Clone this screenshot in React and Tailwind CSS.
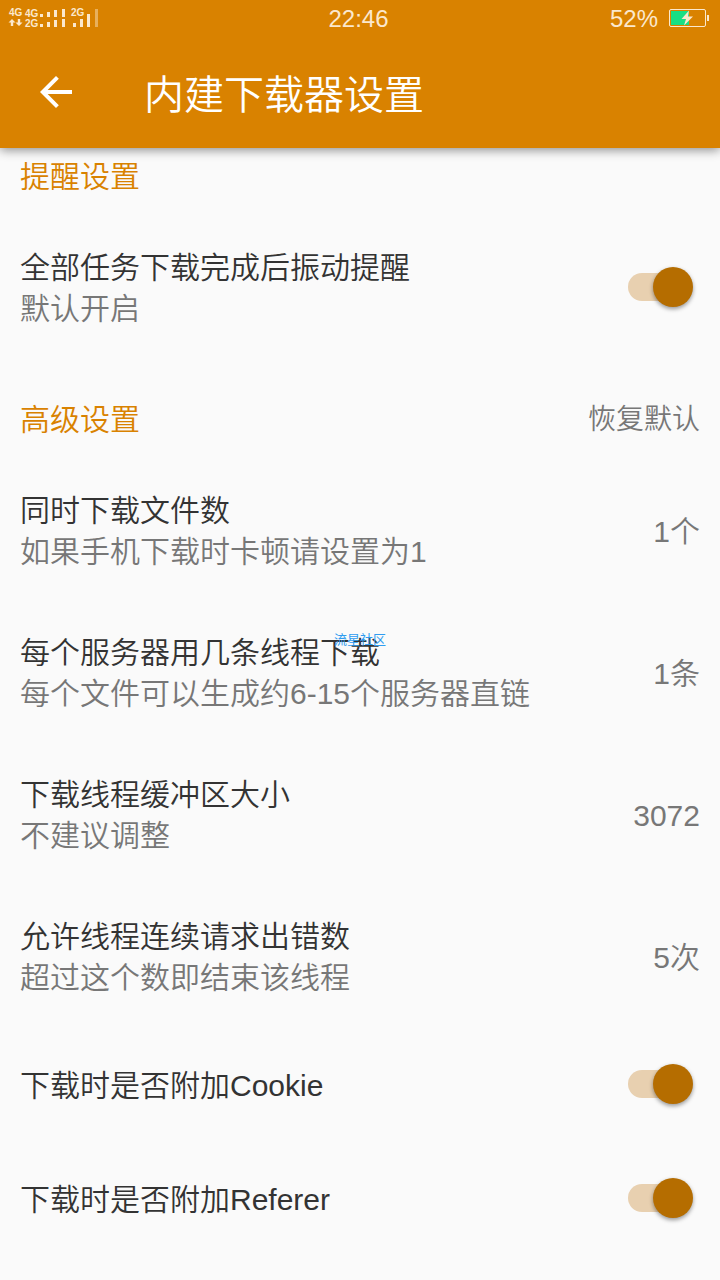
import React, { useState } from 'react';
import { MdArrowBack } from 'react-icons/md';

// Signal strength of both SIM cards
function SignalIcon() {
  return (
    <svg width="92" height="22" viewBox="0 0 92 22" fill="currentColor" aria-hidden="true">
      <g fontFamily="Liberation Sans, Arial, sans-serif" fontSize="10" fontWeight="700">
        <text x="1" y="9">4G</text>
        <text x="17" y="10">4G</text>
        <text x="17" y="20">2G</text>
        <text x="63" y="9">2G</text>
      </g>

      {/* data up / down arrows */}
      <path d="M4 12l3.500 3.500H5.200V19H2.800v-3.500H0.500z" />
      <path d="M11 19l3.500-3.500h-2.300V12H9.800v3.500H7.500z" />

      {/* first SIM, two networks */}
      <path d="M32 7h3v3h-3zM39 5h3v5h-3zM46 3h3v7h-3zM54 2h3v8h-3z" />
      <path d="M32 17h3v3h-3zM39 15h3v5h-3zM46 13h3v7h-3zM54 12h3v8h-3z" />

      {/* second SIM */}
      <path d="M65 16h3v4h-3zM72 12h3v8h-3zM79 7h3v13h-3z" />
      <path d="M87 2h3v18h-3z" opacity="0.45" />
    </svg>
  );
}

function BatteryIcon() {
  return (
    <svg width="41" height="20" viewBox="0 0 41 20" fill="none" aria-hidden="true">
      <rect x="1.500" y="1.500" width="36" height="17" rx="1.500" stroke="#fbe8cd" />
      <rect x="3" y="3" width="18" height="14" fill="#18df84" />
      <path d="M39 7h2v6h-2z" fill="#fbe8cd" />
      <path d="M21 2.500L13.500 11H18l-2 6.500L25 8.500h-5z" fill="#fbe8cd" />
    </svg>
  );
}

function StatusBar() {
  return (
    <div className="grid h-9 grid-cols-3 items-center pr-[11px] pl-2 text-[24px] leading-8 text-[#fbe8cd]">
      <SignalIcon />
      <span className="pt-[2px] text-center">22:46</span>
      <div className="flex items-center justify-end gap-[10px]">
        <span className="pt-[2px]">52%</span>
        <BatteryIcon />
      </div>
    </div>
  );
}

function SectionHeader({ title, children }) {
  return (
    <div className="flex items-center justify-between pb-5">
      <h2 className="text-[#d98200]">{title}</h2>
      {children}
    </div>
  );
}

function Switch({ id, defaultChecked }) {
  const [checked, setChecked] = useState(defaultChecked);

  return (
    <input
      id={id}
      type="checkbox"
      role="switch"
      checked={checked}
      onChange={(e) => setChecked(e.target.checked)}
      className="relative mr-3 mb-[2px] h-7 w-15 shrink-0 cursor-pointer appearance-none rounded-full bg-[#cccccc] before:absolute before:-top-[6px] before:-left-[5px] before:size-10 before:rounded-full before:bg-[#f1f1f1] before:shadow-[0_2px_4px_rgba(0,0,0,0.4)] before:transition-transform checked:bg-[#e8d0b0] checked:before:translate-x-[30px] checked:before:bg-[#b56d00]"
    />
  );
}

function SwitchRow({ id, title, summary }) {
  return (
    <div className={`flex items-center justify-between ${summary ? 'py-[30px]' : 'h-[114px]'}`}>
      <label htmlFor={id} className="flex flex-col">
        <span>{title}</span>
        {summary && <span className="text-[#777777]">{summary}</span>}
      </label>
      <Switch id={id} defaultChecked />
    </div>
  );
}

function ValueRow({ title, summary, value }) {
  return (
    <button type="button" className="flex w-full items-center justify-between py-[30px] text-left">
      <span className="flex flex-col">
        <span>{title}</span>
        <span className="text-[#777777]">{summary}</span>
      </span>
      <span className="text-[#777777]">{value}</span>
    </button>
  );
}

const advancedRows = [
  { title: '同时下载文件数', summary: '如果手机下载时卡顿请设置为1', value: '1个' },
  { title: '每个服务器用几条线程下载', summary: '每个文件可以生成约6-15个服务器直链', value: '1条' },
  { title: '下载线程缓冲区大小', summary: '不建议调整', value: '3072' },
  { title: '允许线程连续请求出错数', summary: '超过这个数即结束该线程', value: '5次' },
];

export default function App() {
  return (
    <div className="relative min-h-screen bg-[#fafafa] font-['Liberation_Sans','Noto_Sans_CJK_SC',sans-serif] text-[30px] leading-[41px] font-[350] text-[#333333]">
      <header className="bg-[#d98200] text-white shadow-[0_2px_10px_rgba(0,0,0,0.45)]">
        <StatusBar />
        <div className="flex h-28 items-center gap-16 px-8">
          <button type="button" aria-label="返回">
            <MdArrowBack size={48} />
          </button>
          <h1 className="pt-[6px] text-[40px] leading-[48px]">内建下载器设置</h1>
        </div>
      </header>

      <main className="px-5">
        <section className="pt-2">
          <SectionHeader title="提醒设置" />
          <SwitchRow id="vibrate" title="全部任务下载完成后振动提醒" summary="默认开启" />
        </section>

        <section className="pt-10">
          <SectionHeader title="高级设置">
            <button type="button" className="text-[28px] text-[#777777]">恢复默认</button>
          </SectionHeader>
          {advancedRows.map((row) => (
            <ValueRow key={row.title} {...row} />
          ))}
          <SwitchRow id="cookie" title="下载时是否附加Cookie" />
          <SwitchRow id="referer" title="下载时是否附加Referer" />
        </section>
      </main>

      {/* community watermark */}
      <div className="pointer-events-none absolute inset-0 flex items-center justify-center text-[13px] leading-4 font-normal text-[#2f9cf0]">
        流星社区
      </div>
    </div>
  );
}
